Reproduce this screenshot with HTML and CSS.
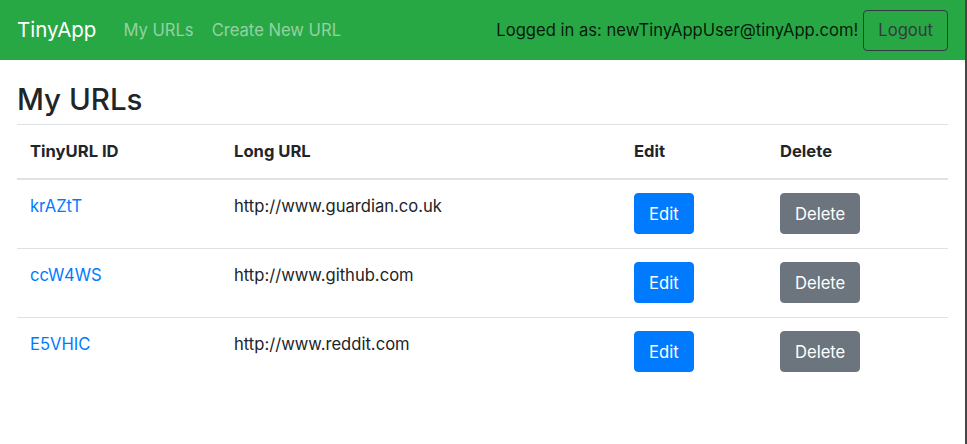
FILE: index.html
```html
<!DOCTYPE html>
<html lang="en">
<head>
<meta charset="utf-8">
<title>TinyApp</title>
<link rel="stylesheet" href="styles.css">
</head>
<body>
<div class="page">
  <nav class="navbar">
    <a class="brand" href="#">TinyApp</a>
    <div class="nav-links">
      <a class="nav-link" href="#">My URLs</a>
      <a class="nav-link" href="#">Create New URL</a>
    </div>
    <div class="nav-right">
      <span class="nav-text">Logged in as: newTinyAppUser@tinyApp.com!</span>
      <button class="btn btn-outline" type="button">Logout</button>
    </div>
  </nav>
  <main class="content">
    <h3 class="title">My URLs</h3>
    <table class="table">
      <thead>
        <tr>
          <th class="c1">TinyURL ID</th>
          <th class="c2">Long URL</th>
          <th class="c3">Edit</th>
          <th class="c4">Delete</th>
        </tr>
      </thead>
      <tbody>
        <tr>
          <td><a href="#">krAZtT</a></td>
          <td>http://www.guardian.co.uk</td>
          <td><button class="btn btn-primary" type="button">Edit</button></td>
          <td><button class="btn btn-secondary" type="button">Delete</button></td>
        </tr>
        <tr>
          <td><a href="#">ccW4WS</a></td>
          <td>http://www.github.com</td>
          <td><button class="btn btn-primary" type="button">Edit</button></td>
          <td><button class="btn btn-secondary" type="button">Delete</button></td>
        </tr>
        <tr>
          <td><a href="#">E5VHIC</a></td>
          <td>http://www.reddit.com</td>
          <td><button class="btn btn-primary" type="button">Edit</button></td>
          <td><button class="btn btn-secondary" type="button">Delete</button></td>
        </tr>
      </tbody>
    </table>
  </main>
</div>
</body>
</html>
```
FILE: styles.css
```css
* { box-sizing: border-box; }
html, body { margin: 0; padding: 0; background: #fff; }
body {
  font-family: Inter, "Liberation Sans", Arial, sans-serif;
  font-size: 16.6px;
  line-height: 26px;
  color: #212529;
}
.page {
  width: 967px;
  height: 444px;
  border-right: 2px solid #45454a;
}
.navbar {
  height: 60px;
  background: #28a745;
  display: flex;
  align-items: center;
  padding: 0 17px;
}
.brand {
  color: #fff;
  text-decoration: none;
  font-size: 20.5px;
  margin-right: 18px;
}
.nav-links { display: flex; }
.nav-link {
  color: rgba(255, 255, 255, 0.5);
  text-decoration: none;
  padding: 0 9px;
}
.nav-right {
  margin-left: auto;
  display: flex;
  align-items: center;
  gap: 5px;
}
.nav-text { color: rgba(0, 0, 0, 0.85); }
.btn {
  font-family: inherit;
  font-size: 16.6px;
  line-height: 26px;
  height: 41px;
  padding: 0 14px;
  border: 1px solid transparent;
  border-radius: 4px;
  cursor: pointer;
}
.btn-outline {
  background: transparent;
  border-color: #343a40;
  color: #343a40;
}
.btn-primary { background: #007bff; border-color: #007bff; color: #fff; }
.btn-secondary { background: #6c757d; border-color: #6c757d; color: #fff; }
.content { padding: 0 17px; }
.title {
  margin: 0;
  padding-top: 21px;
  padding-bottom: 7px;
  font-size: 29.5px;
  line-height: 36px;
  font-weight: 500;
}
.table {
  width: 100%;
  border-collapse: collapse;
}
.table th, .table td {
  padding: 13px 13px 14px;
  text-align: left;
  vertical-align: top;
  border-top: 1px solid #dee2e6;
}
.table thead th {
  font-weight: 700;
  border-bottom: 2px solid #dee2e6;
}
.c1 { width: 204px; }
.c2 { width: 400px; }
.c3 { width: 146px; }
.table a { color: #007bff; text-decoration: none; }
```
